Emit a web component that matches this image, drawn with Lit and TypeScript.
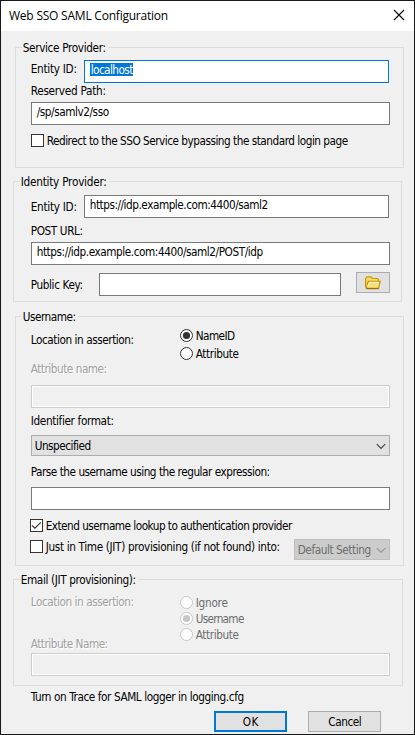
import { LitElement, html, css, svg } from "lit";
import { customElement, property } from "lit/decorators.js";

/** Single line of dialog text, tracked so that it fills the given width. */
@customElement("ui-text")
class UiText extends LitElement {
  @property() text = "";
  @property({ type: Number }) w = 0;
  static styles = css`
    :host { display: block; box-sizing: border-box; height: 15px; line-height: 17px; padding-left: .7px; white-space: pre; flex: none; }
  `;
  render() { return html`<span>${this.text}</span>`; }
  updated() {
    const s = this.renderRoot.querySelector("span") as HTMLElement;
    s.style.letterSpacing = "0px";
    const natural = s.getBoundingClientRect().width;
    if (this.w) s.style.letterSpacing = (this.w - 1 - natural) / this.text.length + "px";
  }
}

@customElement("ui-check")
class UiCheck extends LitElement {
  @property() text = "";
  @property({ type: Number }) w = 0;
  @property({ type: Boolean }) on = false;
  static styles = css`
    :host { display: flex; height: 13px; flex: none; }
    svg { display: block; flex: none; margin-right: 2px; }
    ui-text { margin-top: -1px; }
  `;
  render() {
    return html`<svg width="13" height="13" viewBox="0 0 13 13">
        <rect x=".5" y=".5" width="12" height="12" fill="#fff" stroke="#333" />
        ${this.on ? svg`<path d="M2 6.3 4.9 9.2 10.8 3.3" fill="none" stroke="#333" stroke-width="1.2"/>` : ""}
      </svg><ui-text .text=${this.text} .w=${this.w}></ui-text>`;
  }
}

@customElement("ui-radio")
class UiRadio extends LitElement {
  @property() text = "";
  @property({ type: Number }) w = 0;
  @property({ type: Boolean }) on = false;
  @property({ type: Boolean }) off = false;
  static styles = css`
    :host { display: flex; height: 13px; flex: none; }
    :host([off]) { color: #6d6d6d; }
    svg { display: block; flex: none; margin-right: 2px; }
    ui-text { margin-top: -1px; }
  `;
  render() {
    const c = this.off ? "#c6c6c6" : "#333";
    return html`<svg width="13" height="13" viewBox="0 0 13 13">
        <circle cx="6.5" cy="6.5" r="6" fill="#fff" stroke=${c} />
        ${this.on ? svg`<circle cx="6.5" cy="6.5" r="3.6" fill=${c}/>` : ""}
      </svg><ui-text .text=${this.text} .w=${this.w}></ui-text>`;
  }
}

const t = (text: string, w: number, cls = "") =>
  html`<ui-text class=${cls} .text=${text} .w=${w}></ui-text>`;

const chevron = html`<svg class="chev" width="10" height="7" viewBox="0 0 10 7">
  <path d="M.8 1.2 5 5.4 9.2 1.2" fill="none" stroke="currentColor" stroke-width="1.2" /></svg>`;

const folder = html`<svg width="16" height="14" viewBox="0 0 16 14">
  <path d="M.6 11.5V2.5L2 .9h4l1.5 1.6h5.3l.7 1V6" fill="#f9dc62" stroke="#c8960c" stroke-width="1.2" />
  <path d="M3.2 5.3h12l-1.6 7H1.4z" fill="#fbe07a" stroke="#c08a08" stroke-width="1.1" />
  <path d="M3.9 6.4h10" stroke="#fffbd8" />
  <path d="M3.6 7.2 2.6 11" stroke="#fff3b0" />
  <path d="M1.3 12.6h12.3" stroke="#9c6a04" stroke-width="1.2" /></svg>`;

@customElement("app-root")
class AppRoot extends LitElement {
  static styles = css`
    :host {
      display: flex; flex-direction: column; box-sizing: border-box;
      width: 415px; height: 735px; overflow: hidden;
      border: 1px solid #18181b; background: #f0f0f0; color: #000;
      font: 11.7px "DejaVu Sans Condensed", "DejaVu Sans", sans-serif;
    }
    .title {
      display: flex; justify-content: space-between; flex: none; box-sizing: border-box;
      height: 30px; padding: 7px 9px 0 8px; background: #fff;
      font-family: "Open Sans", "Noto Sans", sans-serif; font-size: 12px;
    }
    .title svg { margin-top: 1px; }
    .title ui-text { line-height: 15px; padding-left: 0; }
    fieldset {
      position: relative; display: flex; flex-direction: column; flex: none;
      box-sizing: border-box; width: 389px; height: 121px; margin: 0;
      padding: 0 0 0 14px; border: 1px solid #dcdcdc; min-width: 0;
    }
    .sp { margin: 16px 0 0 14px; }
    .idp { margin: 13px 0 0 12px; padding-left: 16px; }
    .user { margin: 14px 0 0 14px; height: 250px; }
    .email { margin: 13px 0 0 12px; padding-left: 16px; width: 390px; height: 107px; }
    .legend { position: absolute; left: 6px; top: -8px; padding-right: 2px; background: #f0f0f0; }
    .row { display: flex; align-items: flex-start; flex: none; }
    .lead { width: 54px; }
    .wide { width: 150px; }
    .key { width: 69px; }
    .field {
      display: flex; flex: none; box-sizing: border-box; width: 359px; height: 23px; margin-left: 1px;
      padding: 1px 0 0 4px; border: 1px solid #7a7a7a; background: #fff;
    }
    .row .field { width: 305px; margin-left: 0; }
    .row .pem { width: 242px; margin-top: 1px; }
    .focus { border-color: #0078d7; }
    .focus ui-text { height: 13px; line-height: 15px; margin: 1px 0 0 1px; width: 43px; background: #0078d7; color: #fff; }
    .dis { border-color: #ccc; background: #f0f0f0; box-shadow: inset 0 0 0 1px #fff; }
    .combo {
      display: flex; justify-content: space-between; flex: none; box-sizing: border-box;
      width: 359px; height: 21px; margin-left: 1px; padding: 2px 3px 0 2px;
      border: 1px solid #adadad; background: #e1e1e1;
    }
    .combo svg { margin-top: 5px; color: #444; }
    .combo.gray { width: 96px; margin-left: auto; margin-right: 13px; background: #ccc; border-color: #bfbfbf; color: #6d6d6d; }
    .combo.gray svg { color: #999; }
    .etch { color: #a0a0a0; text-shadow: 1px 1px 0 #fff; }
    .radios { display: flex; flex-direction: column; gap: 5px; }
    .tight { gap: 3px; }
    .btn {
      display: flex; align-items: center; justify-content: center; flex: none; box-sizing: border-box;
      width: 73px; height: 21px; border: 1px solid #adadad; background: #e1e1e1;
    }
    .ok { border: 2px solid #0078d7; }
    .browse { width: 34px; margin-left: 15px; }
    .foot { gap: 21px; margin: 7px 0 0 213px; }
    .note { margin: 3px 0 0 29px; }
    .up { margin-top: -2px; }
    .lift { margin-top: -5px; }
    .m1 { margin-top: 1px; } .m2 { margin-top: 2px; } .m3 { margin-top: 3px; }
    .m4 { margin-top: 4px; } .m5 { margin-top: 5px; } .m7 { margin-top: 7px; }
    .m8 { margin-top: 8px; } .m9 { margin-top: 9px; } .m12 { margin-top: 12px; }
    .m13 { margin-top: 13px; } .m16 { margin-top: 16px; }
    .in1 { margin-left: 1px; }
  `;
  render() {
    return html`
      <div class="title">${t("Web SSO SAML Configuration", 160)}
        <svg width="12" height="12" viewBox="0 0 12 12"><path d="M1 1 11 11M11 1 1 11" stroke="#000" stroke-width="1.1" /></svg>
      </div>
      <fieldset class="sp">
        ${t("Service Provider:", 84, "legend")}
        <div class="row m12">${t("Entity ID:", 47, "lead m1")}<div class="field focus">${t("localhost", 43)}</div></div>
        ${t("Reserved Path:", 76)}
        <div class="field m4">${t("/sp/samlv2/sso", 73)}</div>
        <ui-check class="m9 in1" text="Redirect to the SSO Service bypassing the standard login page" w="302"></ui-check>
      </fieldset>
      <fieldset class="idp">
        ${t("Identity Provider:", 87, "legend")}
        <div class="row m13">${t("Entity ID:", 47, "lead m4")}<div class="field">${t("https://idp.example.com:4400/saml2", 179)}</div></div>
        ${t("POST URL:", 53, "m5")}
        <div class="field m4">${t("https://idp.example.com:4400/saml2/POST/idp", 227)}</div>
        <div class="row m7">${t("Public Key:", 53, "key m5")}<div class="field pem"></div><div class="btn browse">${folder}</div></div>
      </fieldset>
      <fieldset class="user">
        ${t("Username:", 54, "legend")}
        <div class="row m12">${t("Location in assertion:", 104, "wide m3")}
          <div class="radios">
            <ui-radio on text="NameID" w="40"></ui-radio>
            <ui-radio text="Attribute" w="44"></ui-radio>
          </div>
        </div>
        ${t("Attribute name:", 77, "m1 etch")}
        <div class="field dis m9"></div>
        ${t("Identifier format:", 84, "m5")}
        <div class="combo m7">${t("Unspecified", 57)}${chevron}</div>
        ${t("Parse the username using the regular expression:", 240, "m8")}
        <div class="field m8"></div>
        <ui-check class="m9" on text="Extend username lookup to authentication provider" w="247"></ui-check>
        <div class="row m7">
          <ui-check class="m1" text="Just in Time (JIT) provisioning (if not found) into:" w="235"></ui-check>
          <div class="combo gray">${t("Default Setting", 74)}${chevron}</div>
        </div>
      </fieldset>
      <fieldset class="email">
        ${t("Email (JIT provisioning):", 116, "legend")}
        <div class="row m16">${t("Location in assertion:", 104, "wide up etch")}
          <div class="radios tight">
            <ui-radio off text="Ignore" w="33"></ui-radio>
            <ui-radio off on text="Username" w="49"></ui-radio>
            <ui-radio off text="Attribute" w="44"></ui-radio>
          </div>
        </div>
        ${t("Attribute Name:", 78, "lift etch")}
        <div class="field dis m2"></div>
      </fieldset>
      ${t("Turn on Trace for SAML logger in logging.cfg", 214, "note")}
      <div class="row foot"><div class="btn ok">${t("OK", 17)}</div><div class="btn">${t("Cancel", 34)}</div></div>
    `;
  }
}
